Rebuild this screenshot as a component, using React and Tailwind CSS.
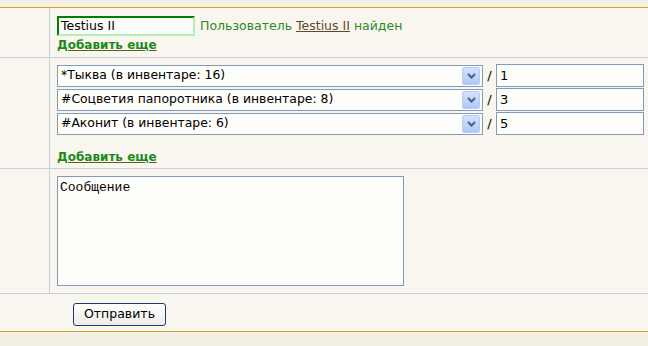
import { useState } from "react";

const font = { fontFamily: '"DejaVu Sans", Verdana, sans-serif' };

function FakeSelect({ label }) {
    return (
        <div className="flex h-[22px] w-[426px] items-center justify-between border border-[#7f9db9] bg-[#fdfdf9] pl-[3px] pr-[2px] text-[12.4px] text-black">
            <span className="leading-none">{label}</span>
            <span className="flex h-[18px] w-[18px] items-center justify-center rounded-[2px] border border-[#b9cbf3] bg-gradient-to-b from-[#d2e0fd] to-[#b2c8f8]">
                <svg width="9" height="6" viewBox="0 0 9 6">
                    <path d="M1 1 L4.5 4.5 L8 1" fill="none" stroke="#4d6185" strokeWidth="2" />
                </svg>
            </span>
        </div>
    );
}

function Qty({ value }) {
    return (
        <div className="flex h-[23px] w-[148px] items-center border border-[#7f9db9] bg-[#fdfdf9] pl-[3px] text-[13px] text-black">
            {value}
        </div>
    );
}

function AddMore() {
    return (
        <div className="h-[14px] text-[12px] leading-[14px]">
            <a href="#" className="font-bold text-[#1a8a1a] underline decoration-[#6b5a20] underline-offset-1">
                Добавить еще
            </a>
        </div>
    );
}

export default function App() {
    const [items] = useState([
        { name: "*Тыква (в инвентаре: 16)", qty: "1" },
        { name: "#Соцветия папоротника (в инвентаре: 8)", qty: "3" },
        { name: "#Аконит (в инвентаре: 6)", qty: "5" },
    ]);

    return (
        <div className="h-[346px] w-[648px] overflow-hidden bg-[#f3f0e3]" style={font}>
            <div className="h-[7px]" />
            <div className="border-t border-[#c9a22c] bg-[#f9f6ef]">

                {/* Получатель */}
                <div className="flex h-[50px] border-b border-[#c5d0de]">
                    <div className="w-[50px] border-r border-[#c5d0de]" />
                    <div className="flex flex-col pl-[7px] pt-[8px]">
                        <div className="flex items-center gap-[5px]">
                            <div className="flex h-[20px] w-[138px] items-center border-2 border-t-[#008000] border-l-[#008000] border-b-[#b4f0b4] border-r-[#b4f0b4] bg-[#fdfdf9] pl-[2px] text-[12.5px] text-black">
                                Testius II
                            </div>
                            <span className="text-[12.5px] text-[#2a8a2a]">
                                Пользователь <a href="#" className="text-[#5a4a2a] underline">Testius II</a> найден
                            </span>
                        </div>
                        <div className="mt-[2px]">
                            <AddMore />
                        </div>
                    </div>
                </div>

                {/* Предметы */}
                <div className="flex h-[111px] border-b border-[#c5d0de]">
                    <div className="w-[50px] border-r border-[#c5d0de]" />
                    <div className="flex flex-col pl-[7px] pt-[6px]">
                        <div className="flex flex-col gap-[1px]">
                            {items.map((it) => (
                                <div key={it.name} className="flex items-center">
                                    <FakeSelect label={it.name} />
                                    <span className="w-[13px] text-center text-[13px] text-black">/</span>
                                    <Qty value={it.qty} />
                                </div>
                            ))}
                        </div>
                        <div className="mt-[15px]">
                            <AddMore />
                        </div>
                    </div>
                </div>

                {/* Сообщение */}
                <div className="flex h-[125px] border-b border-[#c5d0de]">
                    <div className="w-[50px] border-r border-[#c5d0de]" />
                    <div className="pl-[7px] pt-[7px]">
                        <div className="h-[110px] w-[347px] border border-[#7f9db9] bg-[#fdfdf9] px-[2px] pt-[3px] text-[13px] leading-[16px] text-black" style={{ fontFamily: '"Liberation Mono", monospace' }}>
                            Сообщение
                        </div>
                    </div>
                </div>

                {/* Кнопка */}
                <div className="h-[38px] border-b border-[#c9a22c] pl-[73px] pt-[7px]">
                    <button className="h-[23px] w-[93px] rounded-[3px] border border-[#1c3c6c] bg-gradient-to-b from-white to-[#ecebe6] text-[12.5px] text-black">
                        Отправить
                    </button>
                </div>
            </div>
        </div>
    );
}
